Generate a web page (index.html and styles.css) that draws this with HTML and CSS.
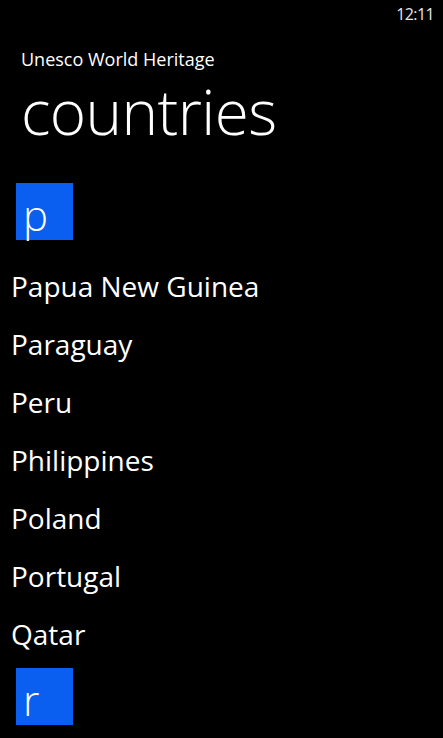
FILE: index.html
```html
<!DOCTYPE html>
<html lang="en">
<head>
  <meta charset="UTF-8" />
  <meta name="viewport" content="width=device-width, initial-scale=1" />
  <title>Unesco World Heritage</title>
  <link rel="stylesheet" href="styles.css">
</head>
<body>

  <div id="statusbar">
    <span id="clock">12:11</span>
  </div>

  <div id="header">
    <p id="appname">Unesco World Heritage</p>
    <h1 id="pagetitle">countries</h1>
  </div>

  <div id="countrylist">
    <div class="group">
      <div class="group-tile">p</div>
      <ul>
        <li>Papua New Guinea</li>
        <li>Paraguay</li>
        <li>Peru</li>
        <li>Philippines</li>
        <li>Poland</li>
        <li>Portugal</li>
        <li>Qatar</li>
      </ul>
    </div>
    <div class="group">
      <div class="group-tile">r</div>
    </div>
  </div>

</body>
</html>
```

FILE: styles.css
```css
/* General Styling */
html, body {
  margin: 0;
  padding: 0;
  background-color: #000;
  color: #fff;
  font-family: "Open Sans", "Liberation Sans", sans-serif;
}
body {
  width: 443px;
  height: 738px;
  overflow: hidden;
}
#statusbar {
  height: 28px;
  display: flex;
  justify-content: flex-end;
  align-items: center;
  padding-right: 9px;
}
#clock {
  font-size: 16px;
  letter-spacing: -0.6px;
  color: #e6e6e6;
}
#header {
  padding-left: 21px;
}
#appname {
  margin: 0;
  font-size: 18px;
  line-height: 24px;
  padding-top: 19px;
}
#pagetitle {
  margin: 2px 0 0 0;
  font-size: 62px;
  font-weight: 300;
  line-height: 76px;
  letter-spacing: -0.6px;
}
#countrylist {
  padding-top: 34px;
}
.group-tile {
  width: 57px;
  height: 57px;
  margin-left: 16px;
  background-color: #0a5ef0;
  color: #fff;
  font-size: 42px;
  font-weight: 300;
  line-height: 42px;
  box-sizing: border-box;
  padding: 11px 0 0 7px;
  margin-bottom: 17px;
}
ul {
  list-style: none;
  margin: 0;
  padding: 0;
}
li {
  height: 58px;
  line-height: 58px;
  font-size: 28px;
  padding-left: 11px;
}
.group + .group .group-tile {
  margin-top: 5px;
}
```
